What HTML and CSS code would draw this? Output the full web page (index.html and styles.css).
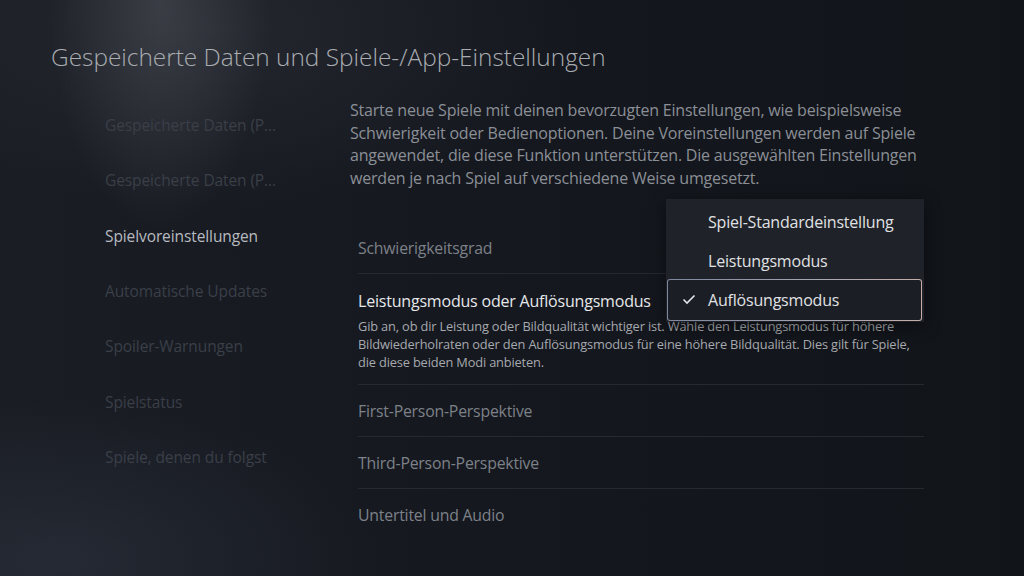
FILE: index.html
```html
<!DOCTYPE html>
<html lang="de">
<head>
    <meta charset="UTF-8">
    <meta name="viewport" content="width=device-width, initial-scale=1.0">
    <title>Spielvoreinstellungen</title>
    <link rel="stylesheet" href="styles.css">
</head>
<body>
    <div class="screen">
        <h1 class="page-title">Gespeicherte Daten und Spiele-/App-Einstellungen</h1>

        <div class="main">
            <nav class="side-menu">
                <div class="side-item" title="Gespeicherte Daten (PS5)">Gespeicherte Daten (P…</div>
                <div class="side-item" title="Gespeicherte Daten (PS4)">Gespeicherte Daten (P…</div>
                <div class="side-item active">Spielvoreinstellungen</div>
                <div class="side-item">Automatische Updates</div>
                <div class="side-item">Spoiler-Warnungen</div>
                <div class="side-item">Spielstatus</div>
                <div class="side-item">Spiele, denen du folgst</div>
            </nav>

            <div class="content">
                <p class="intro">
                    Starte neue Spiele mit deinen bevorzugten Einstellungen, wie beispielsweise<br>
                    Schwierigkeit oder Bedienoptionen. Deine Voreinstellungen werden auf Spiele<br>
                    angewendet, die diese Funktion unterstützen. Die ausgewählten Einstellungen<br>
                    werden je nach Spiel auf verschiedene Weise umgesetzt.
                </p>

                <div class="settings">
                    <div class="setting-row">
                        <div class="setting-label">Schwierigkeitsgrad</div>
                    </div>
                    <div class="setting-row focused">
                        <div class="setting-label">Leistungsmodus oder Auflösungsmodus</div>
                        <div class="setting-desc">
                            Gib an, ob dir Leistung oder Bildqualität wichtiger ist. Wähle den Leistungsmodus für höhere<br>
                            Bildwiederholraten oder den Auflösungsmodus für eine höhere Bildqualität. Dies gilt für Spiele,<br>
                            die diese beiden Modi anbieten.
                        </div>
                    </div>
                    <div class="setting-row">
                        <div class="setting-label">First-Person-Perspektive</div>
                    </div>
                    <div class="setting-row">
                        <div class="setting-label">Third-Person-Perspektive</div>
                    </div>
                    <div class="setting-row last">
                        <div class="setting-label">Untertitel und Audio</div>
                    </div>

                    <div class="dropdown">
                        <div class="dropdown-item">Spiel-Standardeinstellung</div>
                        <div class="dropdown-item second">Leistungsmodus</div>
                        <div class="dropdown-item selected">
                            <svg class="check" width="14" height="11" viewBox="0 0 14 11">
                                <polyline points="1.5,5.5 5,9 12.5,1.5" fill="none" stroke="#e4e5e8" stroke-width="1.6"/>
                            </svg>
                            Auflösungsmodus
                        </div>
                    </div>
                </div>
            </div>
        </div>
    </div>
</body>
</html>
```

FILE: styles.css
```css
html, body {
    margin: 0;
    padding: 0;
}
body {
    font-family: "Open Sans", "Noto Sans", sans-serif;
    background: #14171e;
    color: #e4e5e8;
    -webkit-font-smoothing: antialiased;
}
.screen {
    position: relative;
    width: 1024px;
    height: 576px;
    overflow: hidden;
    box-sizing: border-box;
    padding: 41px 0 0 51px;
    background:
        radial-gradient(ellipse 110px 230px at 160px 0px, rgba(120, 124, 132, 0.28), rgba(120, 124, 132, 0) 100%),
        radial-gradient(ellipse 360px 180px at 220px 30px, rgba(90, 94, 104, 0.18), rgba(90, 94, 104, 0) 100%),
        radial-gradient(ellipse 320px 160px at 60px 560px, rgba(60, 70, 86, 0.32), rgba(60, 70, 86, 0) 100%),
        linear-gradient(90deg, #1a1d24 0%, #15181f 45%, #111419 100%);
}
.page-title {
    margin: 0;
    font-size: 24.4px;
    font-weight: 300;
    line-height: 32px;
    color: #a9acb1;
}
.main {
    display: flex;
    margin-top: 26px;
}
.side-menu {
    width: 245px;
    margin-left: 54px;
    margin-top: -1.5px;
}
.side-item {
    height: 55.3px;
    display: flex;
    align-items: center;
    font-size: 15.5px;
    color: #3a3f48;
    letter-spacing: -0.1px;
    white-space: nowrap;
}
.side-item.active {
    color: #b7bac0;
}
.content {
    width: 574px;
}
.intro {
    margin: 0;
    font-size: 16px;
    line-height: 22.7px;
    color: #8b8f96;
    letter-spacing: -0.2px;
    white-space: nowrap;
}
.settings {
    position: relative;
    margin: 32px 0 0 8px;
    width: 566px;
}
.setting-row {
    padding: 15px 0 14px;
    border-bottom: 1px solid #252930;
}
.setting-row.last {
    border-bottom: none;
}
.setting-label {
    font-size: 15.8px;
    line-height: 22px;
    color: #7d8188;
    letter-spacing: -0.2px;
}
.setting-row.focused {
    padding-top: 16px;
    padding-bottom: 13px;
}
.setting-row.focused .setting-label {
    color: #e6e7ea;
    font-size: 16px;
}
.setting-desc {
    margin-top: 5px;
    font-size: 12.8px;
    line-height: 18px;
    color: #a6a9ae;
    white-space: nowrap;
    letter-spacing: -0.15px;
}
.dropdown {
    position: absolute;
    top: -23px;
    left: 308px;
    width: 258px;
    box-sizing: border-box;
    padding: 4px 2px 1px 1px;
    background: #1f2228;
    box-shadow: 0 4px 16px rgba(0, 0, 0, 0.45);
}
.dropdown-item {
    height: 38px;
    display: flex;
    align-items: center;
    padding-left: 41px;
    font-size: 16px;
    color: #e0e1e4;
    letter-spacing: -0.2px;
}
.dropdown-item.second {
    padding-top: 3px;
    box-sizing: border-box;
}
.dropdown-item.selected {
    position: relative;
    height: 42px;
    box-sizing: border-box;
    padding-left: 40px;
    border: 1.5px solid transparent;
    border-radius: 3px;
    background:
        linear-gradient(#1b1e24, #1b1e24) padding-box,
        linear-gradient(90deg, #7d879c, #a9a7b4 60%, #c7aca6) border-box;
}
.check {
    position: absolute;
    left: 14px;
    top: 14.5px;
}
```
